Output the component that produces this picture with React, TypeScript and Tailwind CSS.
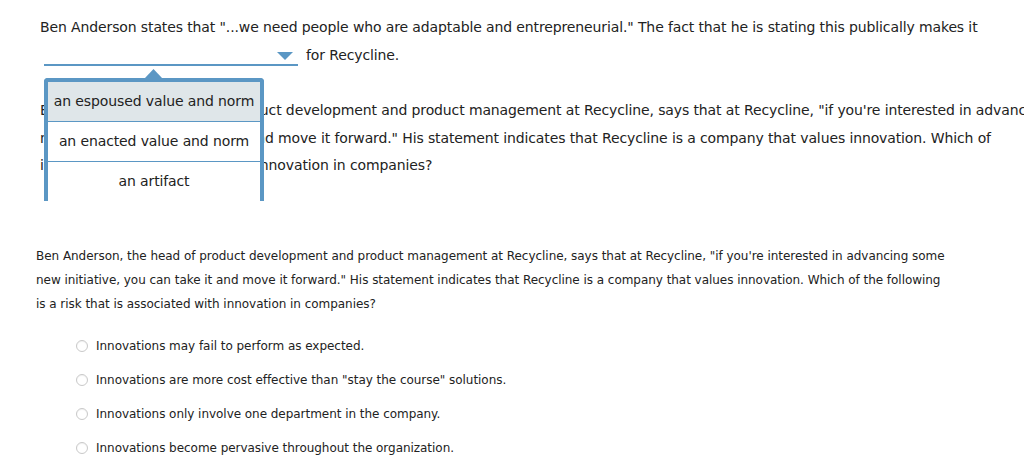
import React from "react";

const blue = "#5b97c4";

function Radio() {
  return (
    <span className="inline-block w-[12px] h-[12px] rounded-full border border-[#c9c9c9] bg-white shadow-[inset_0_1px_1px_rgba(0,0,0,0.06)] shrink-0" />
  );
}

export default function App() {
  const options = [
    "Innovations may fail to perform as expected.",
    'Innovations are more cost effective than "stay the course" solutions.',
    "Innovations only involve one department in the company.",
    "Innovations become pervasive throughout the organization.",
  ];
  return (
    <div
      className="relative w-[1024px] h-[475px] overflow-hidden bg-white text-[#222]"
      style={{ fontFamily: '"DejaVu Sans", Verdana, sans-serif' }}
    >
      {/* Upper question */}
      <div className="pt-[13px] pl-[40px] text-[14px] tracking-[-0.12px]">
        <div className="h-[28px] leading-[28px] whitespace-nowrap">
          Ben Anderson states that "...we need people who are adaptable and entrepreneurial." The fact that he is stating this publically makes it
        </div>
        <div className="flex items-start h-[28px]">
          <div className="relative ml-[4px] w-[254px] h-[25px] border-b-2 border-[#5b97c4]">
            <svg
              className="absolute right-[5px] top-[11px]"
              width="16"
              height="8"
              viewBox="0 0 16 8"
            >
              <polygon points="0,0 16,0 8,8" fill={blue} />
            </svg>
          </div>
          <span className="ml-[8px] leading-[28px] whitespace-nowrap">for Recycline.</span>
        </div>
        <div className="mt-[28px] leading-[27.5px] whitespace-nowrap">
          <div>
            Ben Anderson, the head of product development and product management at Recycline, says that at Recycline, "if you're interested in advancing some
          </div>
          <div>
            new initiative, you can take it and move it forward." His statement indicates that Recycline is a company that values innovation. Which of
          </div>
          <div>is a risk that is associated with innovation in companies?</div>
        </div>
      </div>

      {/* Lower question */}
      <div className="mt-[64px] pl-[36px] text-[12px] tracking-[-0.04px]">
        <div className="leading-[24px] whitespace-nowrap">
          <div>
            Ben Anderson, the head of product development and product management at Recycline, says that at Recycline, "if you're interested in advancing some
          </div>
          <div>
            new initiative, you can take it and move it forward." His statement indicates that Recycline is a company that values innovation. Which of the following
          </div>
          <div>is a risk that is associated with innovation in companies?</div>
        </div>
        <div className="mt-[13px] pl-[40px]">
          {options.map((o) => (
            <div key={o} className="flex items-center h-[34px] gap-[8px] whitespace-nowrap">
              <Radio />
              <span>{o}</span>
            </div>
          ))}
        </div>
      </div>

      {/* Dropdown popup */}
      <div className="absolute left-[44px] top-[69px] w-[220px] text-[14px] tracking-[-0.12px]">
        <svg className="ml-[101px] block" width="17" height="9" viewBox="0 0 17 9">
          <polygon points="0,9 8.5,0 17,9" fill={blue} />
        </svg>
        <div className="border-4 border-b-0 border-[#5b97c4] rounded-t-[4px] bg-white">
          <div className="h-[40px] flex items-center justify-center bg-[#dfe6e9] border-b border-[#5b97c4] whitespace-nowrap">
            an espoused value and norm
          </div>
          <div className="h-[40px] flex items-center justify-center border-b border-[#5b97c4] whitespace-nowrap">
            an enacted value and norm
          </div>
          <div className="h-[39px] flex items-center justify-center whitespace-nowrap">
            an artifact
          </div>
        </div>
      </div>
    </div>
  );
}
